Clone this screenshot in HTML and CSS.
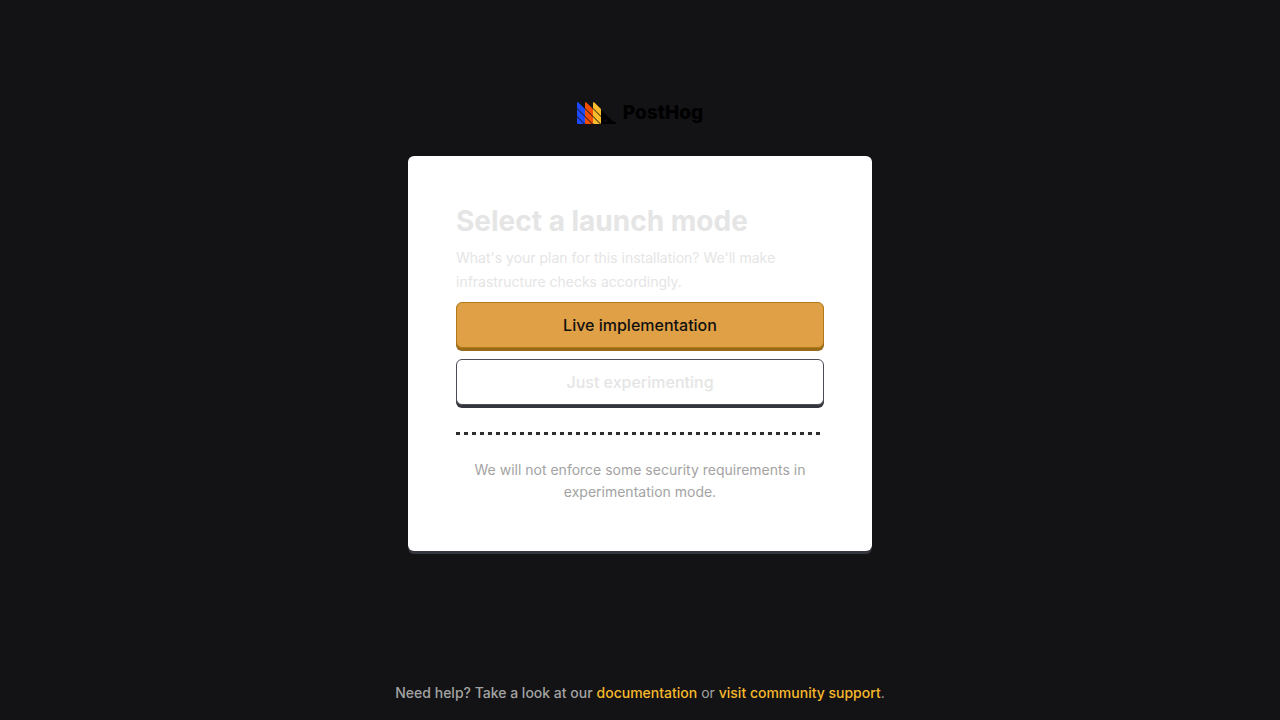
FILE: index.html
```html
<!DOCTYPE html>
<html lang="en">
<head>
<meta charset="utf-8">
<meta name="viewport" content="width=device-width, initial-scale=1">
<title>PostHog</title>
<link rel="stylesheet" href="styles.css">
</head>
<body>
<div class="page">
  <main class="content">
    <div class="logo">
      <svg class="logo-mark" viewBox="0 0 39 22" aria-hidden="true">
        <defs>
          <path id="quills" d="M0 1Q0 0 1.4 .5L8 7.1V14L0 6ZM0 7L8 15V22L0 14ZM0 15L7 22H1Q0 22 0 21Z"/>
        </defs>
        <use href="#quills" fill="#1d4aff"/>
        <use href="#quills" x="8" fill="#f54e00"/>
        <use href="#quills" x="16" fill="#f9bd2b"/>
        <path fill="#000" fill-rule="evenodd" d="M24 7.5L34.5 18Q36.5 20 39 20.2V22H24ZM28.6 17.2a1.2 1.2 0 1 0 .1 0Z"/>
      </svg>
      <span class="logo-name">PostHog</span>
    </div>
    <section class="card">
      <h1 class="title">Select a launch mode</h1>
      <p class="description">What's your plan for this installation? We'll make infrastructure checks accordingly.</p>
      <div class="actions">
        <button class="button button-primary" type="button">Live implementation</button>
        <button class="button" type="button">Just experimenting</button>
      </div>
      <div class="divider"></div>
      <p class="note">We will not enforce some security requirements in experimentation mode.</p>
    </section>
  </main>
  <footer class="footer">
    <span class="help">Need help? Take a look at our</span> <a class="link" href="#">documentation</a> or <a class="link" href="#">visit community support</a>.
  </footer>
</div>
</body>
</html>
```
FILE: styles.css
```css
* { box-sizing: border-box; }
body {
  margin: 0;
  background: #131315;
  font-family: Inter, "Liberation Sans", sans-serif;
  font-size: 14px;
}
.page {
  min-height: 100vh;
  display: flex;
  flex-direction: column;
  align-items: center;
}
.content {
  flex: 1;
  width: 100%;
  max-width: 496px;
  padding: 98px 16px 32px;
}
.logo {
  display: flex;
  align-items: center;
  justify-content: center;
  gap: 7px;
  height: 30px;
  margin-bottom: 28px;
}
.logo-mark { width: 39px; height: 22px; }
.logo-name {
  color: #000;
  font-size: 19px;
  line-height: 24px;
  font-weight: 800;
}
.card {
  padding: 48px;
  background: #fff;
  border-radius: 6px;
  box-shadow: 0 3px 0 #35373e;
}
.title {
  margin: 0 0 8px;
  color: #e5e5e5;
  font-size: 28px;
  line-height: 34px;
  font-weight: 700;
}
.description {
  margin: 0 0 8px;
  color: #e5e5e5;
  line-height: 24px;
}
.actions {
  display: flex;
  flex-direction: column;
  gap: 11px;
}
.button {
  height: 46px;
  padding: 0 16px;
  border: 1px solid #4a4c57;
  border-radius: 6px;
  background: #fff;
  box-shadow: 0 3px 0 #35373e;
  color: #e5e5e5;
  font: 500 16px/24px Inter, "Liberation Sans", sans-serif;
  cursor: pointer;
}
.button-primary {
  border-color: #b17816;
  background: #e0a045;
  box-shadow: 0 3px 0 #996a18;
  color: #111;
}
.divider {
  height: 3px;
  margin: 27px 0 24px;
  background: repeating-linear-gradient(to right, #2d2d32 0 4px, transparent 4px 8px);
}
.note {
  margin: 0;
  color: #a3a3a3;
  line-height: 22px;
  text-align: center;
}
.footer {
  padding: 0 16px 16px;
  color: #a3a3a3;
  line-height: 22px;
  text-align: center;
}
.help { font-weight: 500; }
.link {
  color: #f7b92b;
  font-weight: 500;
  text-decoration: none;
}
```
